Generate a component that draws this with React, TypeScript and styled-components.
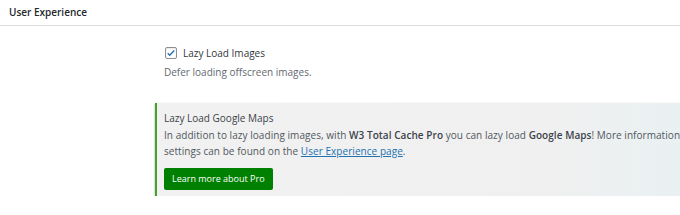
import styled, { createGlobalStyle } from 'styled-components';

const GlobalStyle = createGlobalStyle`
  html, body {
    margin: 0;
    padding: 0;
    background: #ffffff;
    overflow: hidden;
  }
  body {
    font-family: "Open Sans", "Noto Sans", sans-serif;
    font-size: 10px;
    color: #3c434a;
  }
`;

const Page = styled.div`
  width: 680px;
  overflow: hidden;
`;

const SectionTitle = styled.h3`
  margin: 0;
  padding: 4px 9px 0;
  height: 21px;
  font-size: 10px;
  font-weight: 600;
  line-height: 17px;
  color: #23282d;
  border-bottom: 1px solid #dcdcde;
`;

const Body = styled.div`
  padding: 19px 0 0 155px;
`;

const Field = styled.div`
  padding-left: 9px;
  display: flex;
  flex-direction: column;
  gap: 3px;
`;

const CheckRow = styled.label`
  display: flex;
  align-items: center;
  gap: 6px;
  padding-left: 1px;
  line-height: 16px;
  color: #32373c;
`;

const Box = styled.span`
  box-sizing: border-box;
  width: 12px;
  height: 12px;
  border: 1px solid #8c8f94;
  border-radius: 2px;
  background: #fff;
  display: flex;
  align-items: center;
  justify-content: center;
  box-shadow: inset 0 1px 2px rgba(0, 0, 0, 0.1);
`;

const Description = styled.p`
  margin: 0;
  line-height: 16px;
  color: #646970;
`;

const Notice = styled.div`
  margin-top: 23px;
  width: 640px;
  padding: 7px 0 6px 7px;
  border-left: 2px solid #46a12c;
  background: linear-gradient(90deg, #f1f1f1 0%, #f0f0f0 60%, #e3f1f3 100%);
  box-shadow: 0 1px 2px rgba(0, 0, 0, 0.35);
`;

const NoticeTitle = styled.div`
  line-height: 17px;
  color: #3c434a;
`;

const NoticeText = styled.p`
  margin: 0;
  line-height: 16px;
  color: #50575e;
  white-space: nowrap;
  letter-spacing: 0.05px;

  b {
    font-weight: 600;
    color: #3c434a;
  }

  a {
    color: #2271b1;
    text-decoration: underline;
  }
`;

const ProButton = styled.button`
  margin-top: 9px;
  height: 22px;
  padding: 0 8px;
  border: none;
  border-radius: 2px;
  background: #008000;
  color: #ffffff;
  font-family: inherit;
  font-size: 9px;
  line-height: 22px;
  cursor: pointer;
`;

const App = () => {
  return (
    <Page>
      <GlobalStyle />
      <SectionTitle>User Experience</SectionTitle>
      <Body>
        <Field>
          <CheckRow>
            <Box>
              <svg width="10" height="10" viewBox="0 0 20 20">
                <path d="M3.5 10.5l4 4 9-9.5" fill="none" stroke="#2271b1" strokeWidth="2.8" />
              </svg>
            </Box>
            Lazy Load Images
          </CheckRow>
          <Description>Defer loading offscreen images.</Description>
        </Field>
        <Notice>
          <NoticeTitle>Lazy Load Google Maps</NoticeTitle>
          <NoticeText>
            In addition to lazy loading images, with <b>W3 Total Cache Pro</b> you can lazy load <b>Google Maps</b>! More information about these
          </NoticeText>
          <NoticeText>
            settings can be found on the <a href="#">User Experience page</a>.
          </NoticeText>
          <ProButton>Learn more about Pro</ProButton>
        </Notice>
      </Body>
    </Page>
  );
};

export default App;
